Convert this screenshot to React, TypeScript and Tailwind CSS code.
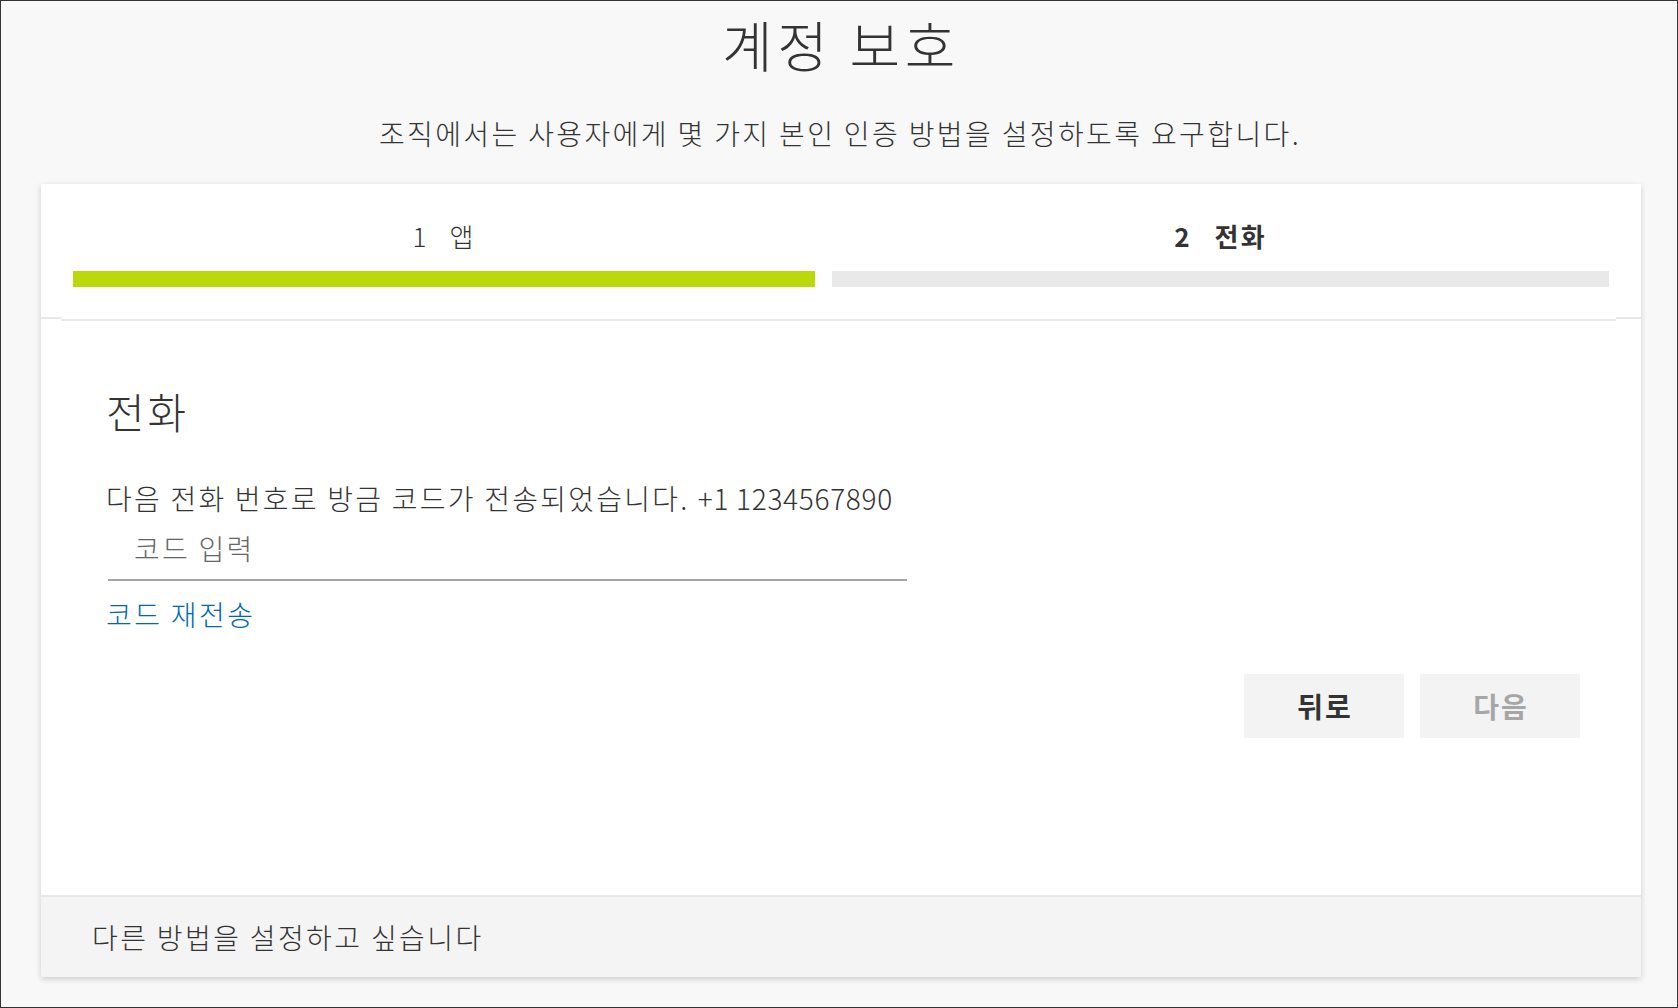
const font = "font-['Noto_Sans_CJK_KR','Noto_Sans_CJK_SC',sans-serif]";

type Step = {
  num: string;
  label: string;
  done: boolean;
  current: boolean;
  width: string;
};

const steps: Step[] = [
  { num: "1", label: "앱", done: true, current: false, width: "w-[742px]" },
  { num: "2", label: "전화", done: false, current: true, width: "w-[777px]" },
];

function StepHeader() {
  return (
    <div className="px-[32px] pt-[34px]">
      <div className="flex gap-[17px]">
        {steps.map((step) => (
          <div key={step.num} className={`${step.width} flex flex-col`}>
            <div
              className={`h-[36px] text-center text-[26px] leading-[36px] text-[#333] ${
                step.current ? "font-bold" : "font-light"
              }`}
            >
              <span>{step.num}</span>
              <span
                className={`tracking-[0.085em] ${
                  step.current ? "ml-[25px]" : "ml-[23px]"
                }`}
              >
                {step.label}
              </span>
            </div>
            <div
              className={`mt-[17px] h-[16px] ${
                step.done ? "bg-[#bad80a]" : "bg-[#e9e9e9]"
              }`}
            />
          </div>
        ))}
      </div>
    </div>
  );
}

export default function App() {
  return (
    <div
      className={`${font} flex h-[1008px] w-[1678px] flex-col border border-[#333] bg-[#f8f8f8] font-light text-[#333]`}
    >
      <h1 className="h-[84px] pl-[4px] text-center text-[55px] font-light leading-[84px] tracking-[0.085em] text-[#333]">
        계정 보호
      </h1>
      <p className="mt-[28px] h-[40px] pl-[2px] text-center text-[28px] leading-[40px] tracking-[0.085em]">
        조직에서는 사용자에게 몇 가지 본인 인증 방법을 설정하도록 요구합니다.
      </p>

      <div className="ml-[40px] mt-[31px] flex h-[793px] w-[1600px] flex-col bg-white shadow-[0_2px_6px_rgba(0,0,0,0.18)]">
        <StepHeader />

        <div className="mt-[30px] flex h-[4px] items-start">
          <div className="h-[2px] w-[20px] bg-[#e8e8e8]" />
          <div className="mt-[2px] h-[2px] flex-1 bg-[#e8e8e8]" />
          <div className="h-[2px] w-[25px] bg-[#e8e8e8]" />
        </div>

        <div className="flex flex-col pl-[65px] pr-[61px]">
          <h2 className="mt-[64px] h-[52px] text-[42px] font-light leading-[52px] tracking-[0.07em] text-[#333]">
            전화
          </h2>
          <p className="mt-[43px] h-[36px] text-[28px] leading-[36px] tracking-[0.08em]">
            다음 전화 번호로 방금 코드가 전송되었습니다.{" "}
            <span className="tracking-[0.7px]">+1 1234567890</span>
          </p>
          <input
            type="text"
            placeholder="코드 입력"
            className="ml-[2px] h-[65px] w-[799px] border-b-2 border-[#a6a6a6] bg-transparent pl-[26px] text-[28px] font-light tracking-[0.08em] text-[#333] outline-none placeholder:text-[#666]"
          />
          <a
            href="#"
            className="mt-[15px] h-[36px] self-start text-[28px] leading-[36px] tracking-[0.085em] text-[#0067b8]"
          >
            코드 재전송
          </a>
          <div className="mt-[42px] flex justify-end gap-[16px]">
            <button
              type="button"
              className="h-[64px] w-[160px] bg-[#f3f3f3] pl-[2px] text-[28px] font-bold tracking-[0.07em] text-[#333]"
            >
              뒤로
            </button>
            <button
              type="button"
              disabled
              className="h-[64px] w-[160px] bg-[#f3f3f3] pl-[2px] text-[28px] font-bold tracking-[0.07em] text-[#a6a6a6]"
            >
              다음
            </button>
          </div>
        </div>

        <div className="mt-auto flex h-[82px] items-center border-t-2 border-[#e8e8e8] bg-[#f4f4f4] pl-[51px]">
          <span className="text-[28px] tracking-[0.085em] text-[#333]">
            다른 방법을 설정하고 싶습니다
          </span>
        </div>
      </div>
    </div>
  );
}
